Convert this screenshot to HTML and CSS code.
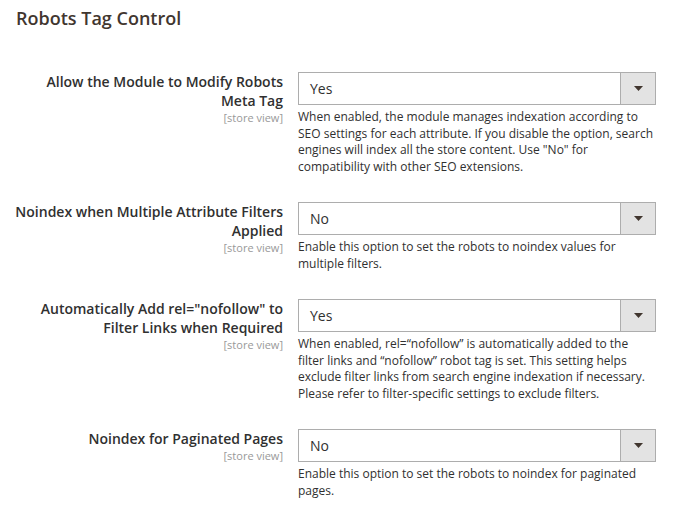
FILE: index.html
```html
<!DOCTYPE html>
<html lang="en">
<head>
<meta charset="utf-8">
<title>Robots Tag Control</title>
<link rel="stylesheet" href="styles.css">
</head>
<body>
<section class="section">
  <h2 class="section-title">Robots Tag Control</h2>
  <div class="fields">
    <div class="field">
      <div class="field-label">
        <label class="label-text">Allow the Module to Modify Robots Meta Tag</label>
        <span class="scope">[store view]</span>
      </div>
      <div class="field-control">
        <div class="select"><span class="select-value">Yes</span><span class="select-arrow"><svg width="9" height="5" viewBox="0 0 9 5"><path d="M0 0H9L4.5 5Z" fill="#41362f"/></svg></span></div>
        <p class="note">When enabled, the module manages indexation according to SEO settings for each attribute. If you disable the option, search engines will index all the store content. Use "No" for compatibility with other SEO extensions.</p>
      </div>
    </div>
    <div class="field">
      <div class="field-label">
        <label class="label-text">Noindex when Multiple Attribute Filters Applied</label>
        <span class="scope">[store view]</span>
      </div>
      <div class="field-control">
        <div class="select"><span class="select-value">No</span><span class="select-arrow"><svg width="9" height="5" viewBox="0 0 9 5"><path d="M0 0H9L4.5 5Z" fill="#41362f"/></svg></span></div>
        <p class="note">Enable this option to set the robots to noindex values for multiple filters.</p>
      </div>
    </div>
    <div class="field">
      <div class="field-label">
        <label class="label-text">Automatically Add rel="nofollow" to Filter Links when Required</label>
        <span class="scope">[store view]</span>
      </div>
      <div class="field-control">
        <div class="select"><span class="select-value">Yes</span><span class="select-arrow"><svg width="9" height="5" viewBox="0 0 9 5"><path d="M0 0H9L4.5 5Z" fill="#41362f"/></svg></span></div>
        <p class="note">When enabled, rel=“nofollow” is automatically added to the filter links and “nofollow” robot tag is set. This setting helps exclude filter links from search engine indexation if necessary. Please refer to filter-specific settings to exclude filters.</p>
      </div>
    </div>
    <div class="field">
      <div class="field-label">
        <label class="label-text">Noindex for Paginated Pages</label>
        <span class="scope">[store view]</span>
      </div>
      <div class="field-control">
        <div class="select"><span class="select-value">No</span><span class="select-arrow"><svg width="9" height="5" viewBox="0 0 9 5"><path d="M0 0H9L4.5 5Z" fill="#41362f"/></svg></span></div>
        <p class="note">Enable this option to set the robots to noindex for paginated pages.</p>
      </div>
    </div>
  </div>
</section>
</body>
</html>
```
FILE: styles.css
```css
html, body {
  margin: 0;
  padding: 0;
  background: #ffffff;
}
body {
  font-family: "Open Sans", "Noto Sans", sans-serif;
  color: #303030;
}
.section {
  padding: 6px 29px 0 10px;
}
.section-title {
  margin: 0;
  padding-left: 6px;
  font-size: 18px;
  font-weight: 600;
  color: #41362f;
  line-height: 25px;
}
.fields {
  margin-top: 41px;
  display: flex;
  flex-direction: column;
  gap: 26.8px;
}
.field {
  display: grid;
  grid-template-columns: 273px 358px;
  column-gap: 15px;
}
.field-label {
  display: flex;
  flex-direction: column;
  align-items: flex-end;
  text-align: right;
}
.label-text {
  font-size: 14px;
  font-weight: 600;
  line-height: 19px;
  color: #303030;
}
.scope {
  font-size: 11px;
  line-height: 15px;
  color: #999999;
}
.select {
  display: flex;
  height: 33px;
  box-sizing: border-box;
  border: 1px solid #adadad;
  background: #ffffff;
}
.select-value {
  flex: 1;
  padding-left: 11px;
  font-size: 14px;
  line-height: 31px;
  color: #303030;
}
.select-arrow {
  width: 34px;
  border-left: 1px solid #adadad;
  background: #e3e3e3;
  display: flex;
  align-items: center;
  justify-content: center;
}
.note {
  margin: 4px 0 0;
  font-size: 12px;
  line-height: 16.6px;
  color: #303030;
}
```
